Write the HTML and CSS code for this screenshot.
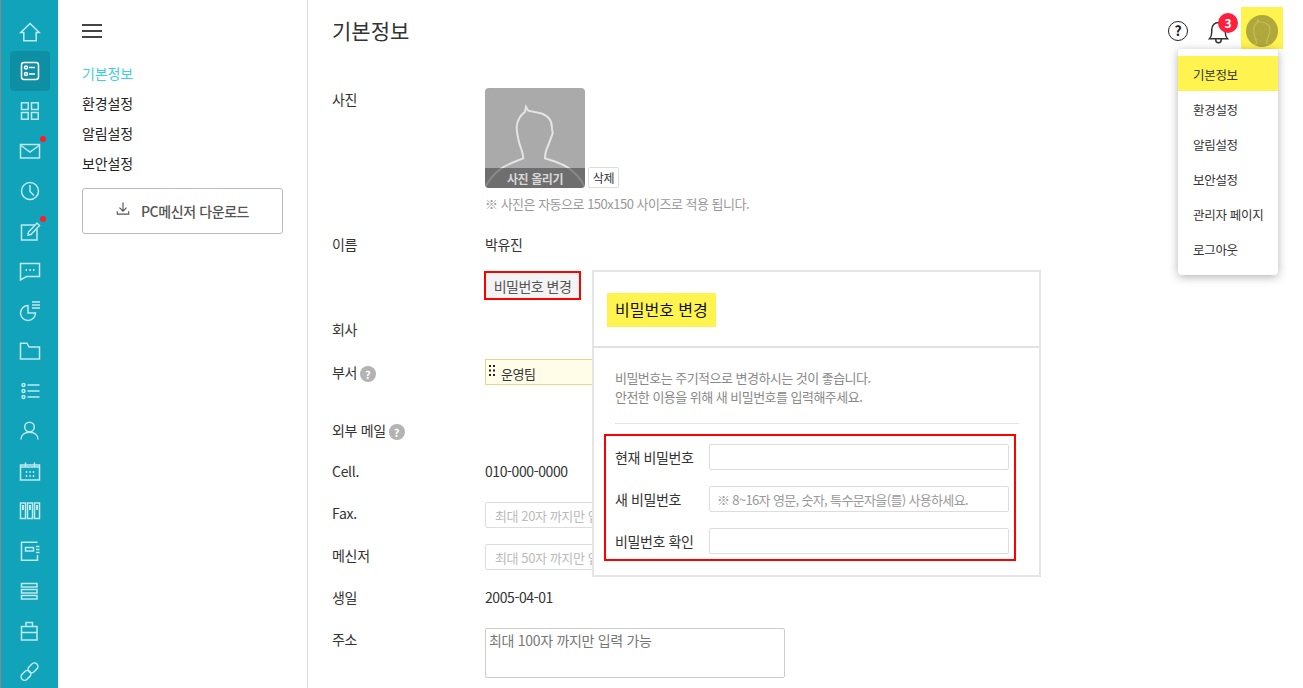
FILE: index.html
```html
<!DOCTYPE html>
<html lang="ko">
<head>
<meta charset="utf-8">
<title>기본정보</title>
<link rel="stylesheet" href="styles.css">
</head>
<body>
<div class="app">
  <nav class="rail">
    <a class="rail-item"><svg viewBox="0 0 40 40"><path d="M20 12.5 10.8 21.5H13.8V29.8H26.2V21.5H29.2Z"/></svg></a>
    <a class="rail-item active"><svg viewBox="0 0 40 40"><rect x="11.5" y="11.5" width="17" height="17" rx="2.5"/><circle cx="16" cy="16.5" r="1.5"/><circle cx="16" cy="23" r="1.5"/><path d="M19 16.5H25M19 23H25"/></svg></a>
    <a class="rail-item"><svg viewBox="0 0 40 40"><rect x="11.5" y="11.8" width="6.7" height="6.7"/><rect x="21.5" y="11.8" width="6.7" height="6.7"/><rect x="11.5" y="21.5" width="6.7" height="6.7"/><rect x="21.5" y="21.5" width="6.7" height="6.7"/></svg></a>
    <a class="rail-item has-dot"><svg viewBox="0 0 40 40"><rect x="10.5" y="13.5" width="19" height="13.5"/><path d="M11 14.5 20 21 29 14.5"/></svg></a>
    <a class="rail-item"><svg viewBox="0 0 40 40"><circle cx="20" cy="20" r="8.5"/><path d="M20 14V20.5L24 24.5"/></svg></a>
    <a class="rail-item has-dot"><svg viewBox="0 0 40 40"><path d="M25 14H11.5V29H27V18"/><path d="M18 24 18.5 21 27 12 29.5 14.5 21 23.5Z"/></svg></a>
    <a class="rail-item"><svg viewBox="0 0 40 40"><path d="M10.5 12.5H29.5V25.5H16.5L10.5 29Z"/><path class="fat" d="M15.5 19H17M19.3 19H20.8M23 19H24.5"/></svg></a>
    <a class="rail-item"><svg viewBox="0 0 40 40"><path d="M18 14.5A7.5 7.5 0 1 0 25.5 22H18Z"/><path d="M22 11H30M22 14H30M22 17H30"/></svg></a>
    <a class="rail-item"><svg viewBox="0 0 40 40"><path d="M10.5 12.2H17L19 16H29.5V28H10.5Z"/></svg></a>
    <a class="rail-item"><svg viewBox="0 0 40 40"><circle cx="13.5" cy="14" r="1.5"/><circle cx="13.5" cy="20" r="1.5"/><circle cx="13.5" cy="26" r="1.5"/><path d="M17.5 14H29.5M17.5 20H29.5M17.5 26H29.5"/></svg></a>
    <a class="rail-item"><svg viewBox="0 0 40 40"><circle cx="19.5" cy="16" r="4.8"/><path d="M11 28.5C11 23.5 15 21.2 19.5 21.2S28 23.5 28 28.5"/></svg></a>
    <a class="rail-item"><svg viewBox="0 0 40 40"><rect x="10.5" y="14" width="19" height="15"/><path d="M15.5 11.5V16M24.5 11.5V16M10.5 16H29.5"/><path class="fat" d="M15.8 21H17.2M19.3 21H20.7M22.8 21H24.2M15.8 25H17.2M19.3 25H20.7M22.8 25H24.2"/></svg></a>
    <a class="rail-item"><svg viewBox="0 0 40 40"><rect x="10.5" y="12" width="5" height="15.5"/><rect x="17.5" y="12" width="5" height="15.5"/><rect x="24.5" y="12" width="5" height="15.5"/><path class="fat" d="M13 14V19M20 14V19M27 14V19"/></svg></a>
    <a class="rail-item"><svg viewBox="0 0 40 40"><path d="M27.5 11.2H11.5V29.3H27.5V24"/><rect x="15.5" y="16.5" width="8" height="3.5"/><path d="M26 15.5H29.5M26 18.5H29.5M26 21.5H29.5"/></svg></a>
    <a class="rail-item"><svg viewBox="0 0 40 40"><rect x="11.5" y="12.5" width="15.5" height="3.5"/><rect x="11.5" y="18.5" width="15.5" height="3.5"/><rect x="11.5" y="24.5" width="15.5" height="3.5"/></svg></a>
    <a class="rail-item"><svg viewBox="0 0 40 40"><rect x="11.5" y="15.5" width="15.5" height="13.5"/><path d="M16 15.5V11.5H22.5V15.5M11.5 21.5H27"/></svg></a>
    <a class="rail-item"><svg viewBox="0 0 40 40"><rect x="10.5" y="20.8" width="11" height="7" rx="3.5" transform="rotate(-45 16 24.3)"/><rect x="17.5" y="13.3" width="11" height="7" rx="3.5" transform="rotate(-45 23 16.8)"/></svg></a>
  </nav>

  <aside class="side">
    <button class="burger" type="button" aria-label="메뉴"><span></span><span></span><span></span></button>
    <ul class="side-menu">
      <li class="current">기본정보</li>
      <li>환경설정</li>
      <li>알림설정</li>
      <li>보안설정</li>
    </ul>
    <button class="download" type="button">
      <svg viewBox="0 0 16 16"><path d="M8 1V10.5M4 7 8 11 12 7M1.5 11V14.5H14.5V11"/></svg>
      <span>PC메신저 다운로드</span>
    </button>
  </aside>

  <main class="main">
    <header class="top">
      <h1 class="title">기본정보</h1>
      <div class="top-tools">
        <span class="help">?</span>
        <span class="bell">
          <svg viewBox="0 0 24 24"><path d="M4 18.5C5.5 17 6 15.5 6 12.5V10C6 6.5 8.5 4 12 4S18 6.5 18 10V12.5C18 15.5 18.5 17 20 18.5ZM9.5 19C9.5 20.8 10.5 22 12 22S14.5 20.8 14.5 19"/></svg>
          <b class="badge">3</b>
        </span>
        <span class="avatar-wrap">
          <span class="avatar">
            <svg viewBox="15 8 70 70"><path d="M0 99C12 78 25 76 38.3 70.3 38 65 36 60 34.3 55.3 33 50 31.7 45 31.7 38.7 32 32 36 27 40 23.7L41 18.7 43.3 22.7 56.7 25.5C63 28 66.7 32 66.7 38L67.7 45.3 63.3 57C61 62 60 66 60 70.3 70 74 88 76 100 99"/></svg>
          </span>
        </span>
      </div>
    </header>

    <div class="form">
      <div class="row row-photo">
        <div class="label">사진</div>
        <div class="value">
          <div class="photo-line">
            <div class="photo">
              <svg viewBox="0 0 100 100"><path d="M0 99C12 78 25 76 38.3 70.3 38 65 36 60 34.3 55.3 33 50 31.7 45 31.7 38.7 32 32 36 27 40 23.7L41 18.7 43.3 22.7 56.7 25.5C63 28 66.7 32 66.7 38L67.7 45.3 63.3 57C61 62 60 66 60 70.3 70 74 88 76 100 99"/></svg>
              <span class="photo-up">사진 올리기</span>
            </div>
            <button class="del" type="button">삭제</button>
          </div>
          <p class="note">※ 사진은 자동으로 150x150 사이즈로 적용 됩니다.</p>
        </div>
      </div>
      <div class="row row-name"><div class="label">이름</div><div class="value">박유진</div></div>
      <div class="row row-pw"><div class="label"></div><div class="value"><button class="pw-btn" type="button">비밀번호 변경</button></div></div>
      <div class="row row-company"><div class="label">회사</div><div class="value"></div></div>
      <div class="row row-dept">
        <div class="label">부서 <i class="q">?</i></div>
        <div class="value"><div class="chip"><svg viewBox="0 0 6 11"><path d="M0 0H2V2H0ZM4 0H6V2H4ZM0 4.5H2V6.5H0ZM4 4.5H6V6.5H4ZM0 9H2V11H0ZM4 9H6V11H4Z"/></svg><span class="chip-text">운영팀</span></div></div>
      </div>
      <div class="row row-mail"><div class="label">외부 메일 <i class="q">?</i></div><div class="value"></div></div>
      <div class="row row-std"><div class="label">Cell.</div><div class="value">010-000-0000</div></div>
      <div class="row row-std"><div class="label">Fax.</div><div class="value"><input class="field" placeholder="최대 20자 까지만 입력 가능"></div></div>
      <div class="row row-std"><div class="label">메신저</div><div class="value"><input class="field" placeholder="최대 50자 까지만 입력 가능"></div></div>
      <div class="row row-std"><div class="label">생일</div><div class="value">2005-04-01</div></div>
      <div class="row row-addr"><div class="label">주소</div><div class="value"><div class="area">최대 100자 까지만 입력 가능</div></div></div>
    </div>
  </main>
</div>

<ul class="dropdown">
  <li class="hl">기본정보</li>
  <li>환경설정</li>
  <li>알림설정</li>
  <li>보안설정</li>
  <li>관리자 페이지</li>
  <li>로그아웃</li>
</ul>

<section class="modal">
  <div class="modal-head"><h2 class="modal-title">비밀번호 변경</h2></div>
  <div class="modal-body">
    <p class="modal-desc">비밀번호는 주기적으로 변경하시는 것이 좋습니다.<br>안전한 이용을 위해 새 비밀번호를 입력해주세요.</p>
    <div class="modal-rule"></div>
    <div class="pw-box">
      <label class="pw-row"><span>현재 비밀번호</span><input class="pw-input"></label>
      <label class="pw-row"><span>새 비밀번호</span><input class="pw-input" placeholder="※ 8~16자 영문, 숫자, 특수문자을(를) 사용하세요."></label>
      <label class="pw-row"><span>비밀번호 확인</span><input class="pw-input"></label>
    </div>
  </div>
</section>
</body>
</html>
```
FILE: styles.css
```css
* { box-sizing: border-box; }
html, body { margin: 0; height: 100%; overflow: hidden; background: #fff; }
body { font-family: "Noto Sans CJK KR", "Noto Sans", sans-serif; font-size: 14px; color: #333; letter-spacing: -0.3px; }
ul { list-style: none; margin: 0; padding: 0; }
h1, h2, p { margin: 0; font-weight: 400; }
button, input { font-family: inherit; letter-spacing: inherit; }

.app { display: flex; height: 688px; }

.rail { width: 58px; flex: none; background: #11a3b9; border-left: 1px solid #8a8a8a; padding: 11px 0 0 9px; overflow: hidden; }
.rail-item { display: block; width: 40px; height: 40px; border-radius: 4px; position: relative; }
.rail-item svg { display: block; width: 40px; height: 40px; fill: none; stroke: #bfe9ee; stroke-width: 1.5; }
.rail-item .fat { stroke-width: 2; }
.rail-item.active { background: #0f8fa3; }
.rail-item.active svg { stroke: #fff; }
.has-dot::after { content: ""; position: absolute; left: 30px; top: 5px; width: 6px; height: 6px; border-radius: 50%; background: #ff1a2e; }

.side { width: 250px; flex: none; border-right: 1px solid #ddd; padding: 24px 24px 0; }
.burger { display: flex; flex-direction: column; gap: 4px; width: 20px; padding: 0; border: 0; background: none; margin: 0 0 20px; }
.burger span { display: block; height: 2px; background: #444; }
.side-menu li { height: 30px; line-height: 30px; color: #222; letter-spacing: -0.1px; }
.side-menu .current { color: #3ccfdc; }
.download { display: flex; align-items: center; justify-content: center; gap: 11px; width: 201px; height: 46px; margin-top: 10px; background: #fff; border: 1px solid #bbb; border-radius: 3px; color: #555; font-size: 14px; font-weight: 500; letter-spacing: -0.4px; }
.download svg { width: 14px; height: 15px; fill: none; stroke: #555; stroke-width: 1.3; margin-top: -5px; }

.main { flex: 1; padding: 0 20px 0 24px; min-width: 0; }
.top { display: flex; align-items: flex-start; justify-content: space-between; height: 89px; }
.title { font-size: 21px; line-height: 60px; color: #333; letter-spacing: 0; }
.top-tools { display: flex; align-items: flex-start; padding-top: 7px; }
.help { width: 20px; height: 20px; margin-top: 14px; border: 1.5px solid #222; border-radius: 50%; text-align: center; font-size: 14px; font-weight: 700; line-height: 17px; color: #222; letter-spacing: 0; }
.bell { position: relative; width: 27px; height: 27px; margin: 11px 0 0 17px; }
.bell svg { display: block; width: 27px; height: 27px; fill: none; stroke: #333; stroke-width: 1.3; }
.badge { position: absolute; left: 13px; top: -5px; width: 20px; height: 20px; border-radius: 50%; background: #ff1f3d; color: #fff; font-size: 12px; line-height: 20px; text-align: center; letter-spacing: 0; }
.avatar-wrap { display: flex; align-items: flex-end; justify-content: center; width: 42px; height: 42px; margin-left: 9px; padding-bottom: 2px; background: #fff350; }
.avatar { width: 32px; height: 32px; border-radius: 50%; background: #b0a83c; overflow: hidden; }
.avatar svg { display: block; width: 32px; height: 32px; fill: none; stroke: #c5bd55; stroke-width: 2.6; }

.row { display: flex; }
.label { width: 153px; flex: none; line-height: 20px; color: #333; }
.value { flex: 1; line-height: 20px; color: #333; min-width: 0; letter-spacing: -0.4px; }
.row-photo { height: 145px; }
.row-name { height: 37px; }
.row-pw { height: 48px; }
.row-company { height: 43px; }
.row-dept { height: 58px; }
.row-mail { height: 41px; }
.row-std { height: 42px; }
.row-addr { height: 60px; }

.photo-line { display: flex; align-items: flex-end; gap: 3px; margin-top: -1px; }
.photo { position: relative; width: 100px; height: 100px; border-radius: 4px; background: #aaa; overflow: hidden; }
.photo svg { display: block; width: 100px; height: 100px; fill: none; stroke: #e4e4e4; stroke-width: 2; }
.photo-up { position: absolute; left: 0; right: 0; bottom: 0; height: 20px; background: rgba(60, 60, 60, .55); color: #d8d8d8; font-size: 12px; font-weight: 700; line-height: 22px; text-align: center; }
.del { width: 31px; height: 21px; padding: 0; background: #fff; border: 1px solid #ddd; border-radius: 2px; font-size: 12px; color: #333; line-height: 18px; }
.note { margin-top: 6px; font-size: 13px; color: #999; line-height: 20px; letter-spacing: -0.5px; }

.pw-btn { display: block; width: 97px; height: 29px; margin: 0 0 0 -1px; padding: 0; background: #f3f3f3; border: 2px solid #f00; color: #555; font-size: 14px; line-height: 22px; letter-spacing: -0.5px; }

.q { display: inline-block; width: 16px; height: 16px; margin-left: -1px; border-radius: 50%; background: #b3b3b3; color: #fff; font-size: 11px; font-style: normal; font-weight: 700; line-height: 16px; text-align: center; vertical-align: -1px; letter-spacing: 0; }

.chip { display: flex; align-items: center; gap: 6px; width: 300px; height: 26px; margin-top: -3px; padding-left: 3px; background: #fffde8; border: 1px solid #e2d88f; color: #333; font-size: 13px; }
.chip svg { width: 6px; height: 11px; fill: #222; margin-top: -3px; }
.chip-text { padding-top: 3px; }

.field { display: block; width: 300px; height: 26px; margin-top: -1px; padding: 0 9px; border: 1px solid #ddd; border-radius: 2px; font-size: 13px; color: #333; background: #fff; }
.field::placeholder { color: #bbb; opacity: 1; }
.area { width: 300px; height: 50px; margin-top: -1px; padding: 1px 3px; border: 1px solid #ccc; border-radius: 2px; color: #777; font-size: 14px; letter-spacing: -0.3px; }

.dropdown { position: absolute; left: 1178px; top: 49px; width: 100px; height: 226px; padding-top: 7px; background: #fff; border-radius: 4px; box-shadow: 0 2px 10px rgba(0, 0, 0, .3); font-size: 12.5px; letter-spacing: -0.3px; color: #333; }
.dropdown li { height: 35px; line-height: 37px; padding-left: 15px; white-space: nowrap; }
.dropdown .hl { background: #fff350; }

.modal { position: absolute; left: 592px; top: 270px; width: 449px; height: 307px; background: #fff; border: 2px solid #e5e5e5; }
.modal-head { height: 76px; padding: 21px 0 0 13px; border-bottom: 2px solid #e2e2e2; }
.modal-title { display: inline-block; height: 34px; padding: 0 8px; background: #fff350; color: #111; font-size: 16px; line-height: 32px; letter-spacing: 0; }
.modal-body { padding: 20px 20px 0 21px; }
.modal-desc { color: #888; font-size: 13px; line-height: 19px; letter-spacing: -0.53px; }
.modal-rule { height: 1px; margin: 17px 0 10px; background: #e5e5e5; }
.pw-box { width: 412px; height: 127px; padding: 8px 0 0 9px; margin-left: -11px; border: 2px solid #f00; display: flex; flex-direction: column; gap: 16px; }
.pw-row { display: flex; align-items: center; height: 26px; color: #333; font-size: 14px; letter-spacing: -0.4px; }
.pw-row span { width: 94px; flex: none; }
.pw-input { width: 300px; height: 26px; padding: 0 7px; border: 1px solid #ddd; border-radius: 2px; font-size: 13px; background: #fff; letter-spacing: -0.65px; }
.pw-input::placeholder { color: #999; opacity: 1; }
```
